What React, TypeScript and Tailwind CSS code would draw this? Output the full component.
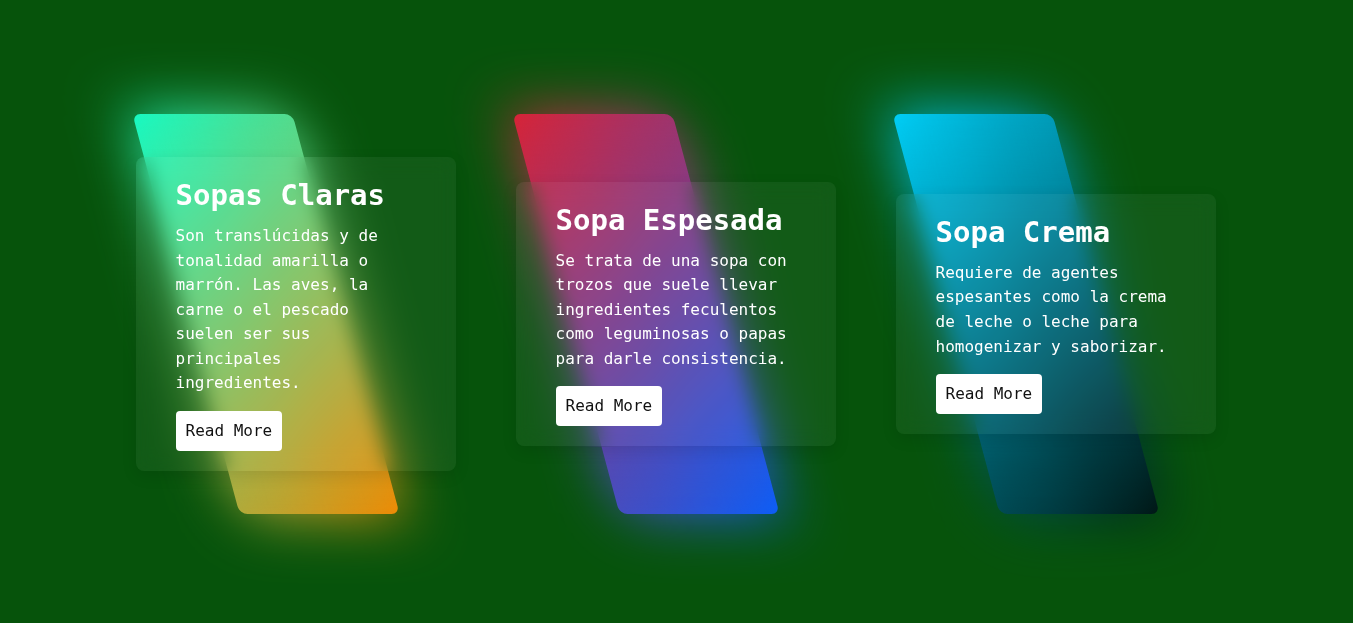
const soups = [
  {
    title: "Sopas Claras",
    text: "Son translúcidas y de tonalidad amarilla o marrón. Las aves, la carne o el pescado suelen ser sus principales ingredientes.",
    gradient: "bg-[linear-gradient(135deg,#12fcc6,#f28800)]",
  },
  {
    title: "Sopa Espesada",
    text: "Se trata de una sopa con trozos que suele llevar ingredientes feculentos como leguminosas o papas para darle consistencia.",
    gradient: "bg-[linear-gradient(135deg,#dc2232,#075ffb)]",
  },
  {
    title: "Sopa Crema",
    text: "Requiere de agentes espesantes como la crema de leche o leche para homogenizar y saborizar.",
    gradient: "bg-[linear-gradient(135deg,#00d2fb,#001310)]",
  },
];

function SoupCard({ title, text, gradient }: { title: string; text: string; gradient: string }) {
  return (
    <div className="relative mx-[30px] my-[40px] flex h-[400px] w-[320px] items-center justify-center">
      <div className={`absolute top-0 left-[50px] h-full w-1/2 skew-x-[15deg] rounded-lg ${gradient}`} />
      <div className={`absolute top-0 left-[50px] h-full w-1/2 skew-x-[15deg] rounded-lg blur-[30px] ${gradient}`} />
      <div className="relative z-[1] w-full rounded-lg bg-white/5 px-10 py-5 text-white shadow-[0_5px_15px_rgba(0,0,0,0.1)] backdrop-blur-[10px]">
        <h2 className="mb-[10px] text-[29px] leading-[37px] font-bold">{title}</h2>
        <p className="mb-[10px] text-[16px] leading-[24.6px]">{text}</p>
        <div className="flex pt-[5px]">
          <a href="#" className="rounded bg-white p-[10px] text-[16px] leading-[20px] text-[#111] no-underline">
            Read More
          </a>
        </div>
      </div>
    </div>
  );
}

export default function App() {
  return (
    <div className="flex min-h-screen items-center justify-center bg-[#06530b] pt-[5px] pr-[2px] font-['DejaVu_Sans_Mono',monospace]">
      <div className="flex flex-wrap items-center justify-center">
        {soups.map((s, i) => (
          <SoupCard key={i} {...s} />
        ))}
      </div>
    </div>
  );
}
